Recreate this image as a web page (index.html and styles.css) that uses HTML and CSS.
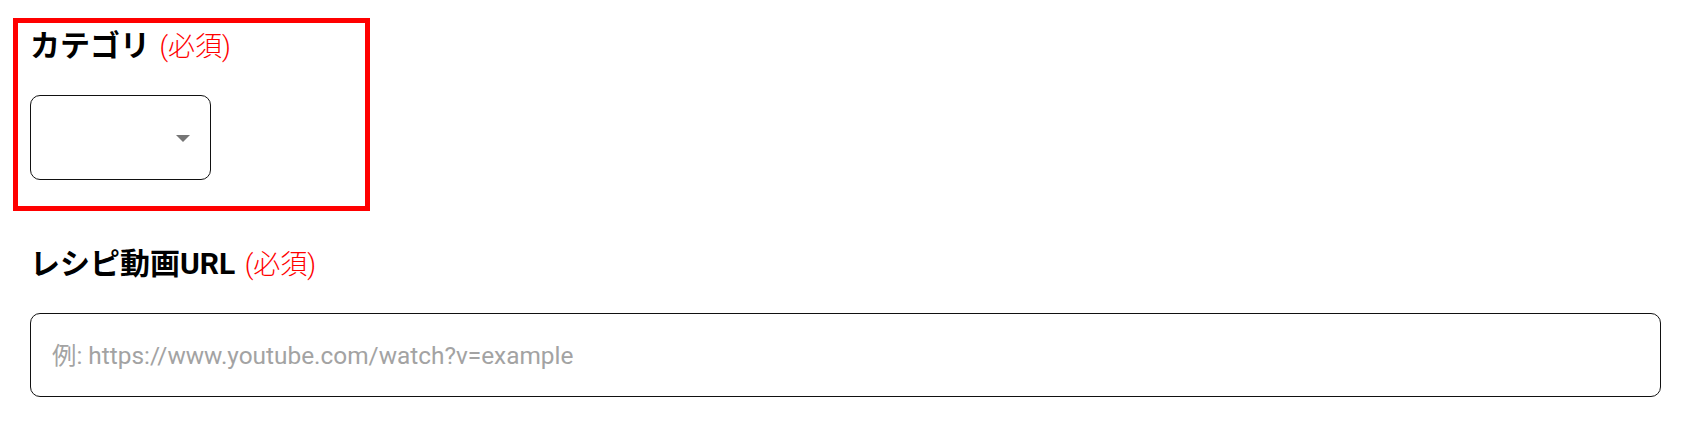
FILE: index.html
```html
<!DOCTYPE html>
<html lang="ja">
<head>
<meta charset="utf-8">
<title>レシピ登録</title>
<link rel="stylesheet" href="styles.css">
</head>
<body>
<form class="form">
  <div class="group group--highlight">
    <label class="label" for="category">カテゴリ <span class="required">(必須)</span></label>
    <div class="select-wrap">
      <select id="category" class="select">
        <option value=""></option>
      </select>
    </div>
  </div>
  <div class="group">
    <label class="label" for="url">レシピ動画URL <span class="required">(必須)</span></label>
    <input id="url" class="input" type="text" placeholder="例: https://www.youtube.com/watch?v=example">
  </div>
</form>
</body>
</html>
```

FILE: styles.css
```css
* { box-sizing: border-box; }

html, body {
  margin: 0;
  background: #ffffff;
}

body {
  font-family: Roboto, "Noto Sans CJK JP", sans-serif;
  color: #000000;
}

.form {
  display: flex;
  flex-direction: column;
  align-items: flex-start;
  gap: 25px;
  padding: 18px 17px 0 13px;
}

.group {
  display: flex;
  flex-direction: column;
  align-items: flex-start;
  width: 100%;
  padding: 5px 12px 26px 12px;
  border: 5px solid transparent;
}

.group--highlight {
  width: 357px;
  border-color: #ff0000;
}

.label {
  display: block;
  font-size: 30px;
  line-height: 36px;
  font-weight: 700;
  margin-bottom: 30px;
}

.required {
  font-family: Roboto, "Noto Sans CJK JP", sans-serif;
  font-size: 27px;
  font-weight: 300;
  color: #ff0000;
  margin-left: 2px;
}

.select-wrap {
  position: relative;
  width: 181px;
  height: 85px;
}

.select-wrap::after {
  content: "";
  position: absolute;
  right: 21px;
  top: 40px;
  width: 0;
  height: 0;
  border-left: 7px solid transparent;
  border-right: 7px solid transparent;
  border-top: 7px solid #757575;
  pointer-events: none;
}

.select {
  -webkit-appearance: none;
  appearance: none;
  width: 100%;
  height: 100%;
  border: 1px solid #111111;
  border-radius: 10px;
  background: #ffffff;
  font-family: Roboto, "Noto Sans CJK JP", sans-serif;
  font-size: 22px;
  padding: 0 21px;
  outline: none;
}

.input {
  width: 100%;
  height: 84px;
  border: 1px solid #111111;
  border-radius: 10px;
  background: #ffffff;
  font-family: Roboto, "Noto Sans CJK JP", sans-serif;
  font-size: 24.4px;
  padding: 0 21px;
  outline: none;
  color: #000000;
}

.input::placeholder {
  color: #a3a3a3;
}
```
